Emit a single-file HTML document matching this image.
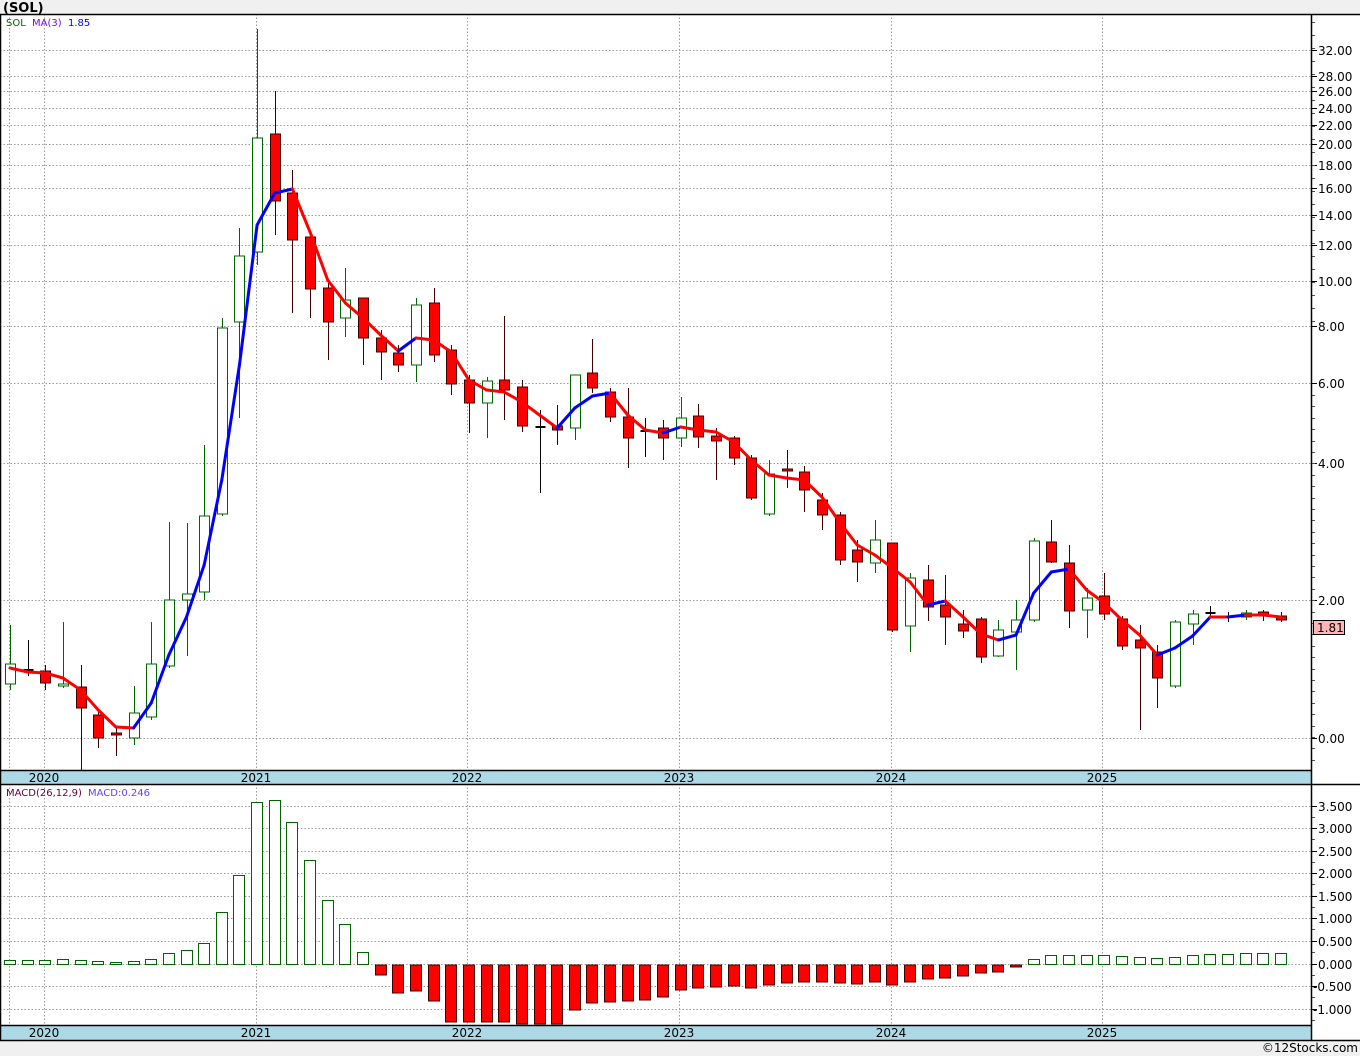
<!DOCTYPE html>
<html><head><meta charset="utf-8"><style>
body{margin:0;background:#f0f0f0;width:1360px;height:1056px;overflow:hidden;font-family:"DejaVu Sans","Liberation Sans",sans-serif}
svg{position:absolute;left:0;top:0}
</style></head><body>
<svg id="s" width="1360" height="1056" xmlns="http://www.w3.org/2000/svg" font-family="DejaVu Sans, Liberation Sans, sans-serif">
<rect x="0" y="14" width="1311" height="1026" fill="#fff"/>
<rect x="1311" y="14" width="49" height="1026" fill="#fff"/>
<text x="3" y="12" font-size="13" font-weight="bold">(SOL)</text>
<g id="g"></g>
<rect x="0" y="770" width="1311" height="14" fill="#add8e6"/>
<rect x="0" y="1025" width="1311" height="15" fill="#add8e6"/>
<g stroke="#000" stroke-width="1.5" fill="none">
<line x1="0" y1="14.5" x2="1360" y2="14.5"/>
<line x1="0" y1="770.5" x2="1311" y2="770.5"/>
<line x1="0" y1="784.5" x2="1360" y2="784.5"/>
<line x1="0" y1="1025.5" x2="1311" y2="1025.5"/>
<line x1="0" y1="1040.5" x2="1360" y2="1040.5"/>
<line x1="1311.5" y1="14" x2="1311.5" y2="1040"/>
<line x1="0.5" y1="14" x2="0.5" y2="1040"/>
</g>
<g font-size="12" fill="#000">
<text x="44" y="782" text-anchor="middle">2020</text><text x="256" y="782" text-anchor="middle">2021</text><text x="467" y="782" text-anchor="middle">2022</text><text x="679" y="782" text-anchor="middle">2023</text><text x="891" y="782" text-anchor="middle">2024</text><text x="1102" y="782" text-anchor="middle">2025</text>
<text x="44" y="1037" text-anchor="middle">2020</text><text x="256" y="1037" text-anchor="middle">2021</text><text x="467" y="1037" text-anchor="middle">2022</text><text x="679" y="1037" text-anchor="middle">2023</text><text x="891" y="1037" text-anchor="middle">2024</text><text x="1102" y="1037" text-anchor="middle">2025</text>
</g>
<g font-size="10">
<text x="6" y="26" fill="#006400">SOL</text><text x="32" y="26" fill="#8000ff">MA(3)</text><text x="68" y="26" fill="#0000ff">1.85</text>
<text x="6" y="796" fill="#600040">MACD(26,12,9)</text><text x="88" y="796" fill="#6a3cff">MACD:0.246</text>
</g>
<rect x="1313.5" y="620.5" width="31" height="14" fill="#ffb6b6" stroke="#000"/>
<text x="1317" y="632" font-size="12">1.81</text>
<text x="1358" y="1052" font-size="12" text-anchor="end">©12Stocks.com</text>
</svg>
<script>
var g=document.getElementById('g'),h='';
var pl=[[32,50],[28,76],[26,91],[24,108],[22,125],[20,144],[18,165],[16,188],[14,215],[12,245],[10,281],[8,326],[6,383],[4,463],[2,600],[0,738]];
var dash='stroke="#999" stroke-dasharray="1.5,2" stroke-width="1"';
pl.forEach(function(p){h+='<line x1="0" y1="'+p[1]+'.5" x2="1311" y2="'+p[1]+'.5" '+dash+'/>';h+='<line x1="1311" y1="'+p[1]+'.5" x2="1317" y2="'+p[1]+'.5" stroke="#000"/>';h+='<text x="1318" y="'+(p[1]+5)+'" font-size="12">'+p[0].toFixed(2)+'</text>';});
for(var y=395;y<760;y+=11.4){h+='<line x1="1311" y1="'+Math.round(y)+'.5" x2="1315" y2="'+Math.round(y)+'.5" stroke="#555"/>';}
for(var y=22;y<330;y+=13){h+='<line x1="1311" y1="'+Math.round(y)+'.5" x2="1315" y2="'+Math.round(y)+'.5" stroke="#555"/>';}
var ml=[[3.5,806],[3,828],[2.5,851],[2,873],[1.5,896],[1,918],[0.5,941],[0,964],[-0.5,986],[-1,1009]];
ml.forEach(function(p){h+='<line x1="0" y1="'+p[1]+'.5" x2="1311" y2="'+p[1]+'.5" '+dash+'/>';h+='<line x1="1311" y1="'+p[1]+'.5" x2="1317" y2="'+p[1]+'.5" stroke="#000"/>';h+='<line x1="1311" y1="'+(p[1]+11)+'.5" x2="1315" y2="'+(p[1]+11)+'.5" stroke="#555"/>';h+='<text x="'+(p[0]<0?1313:1318)+'" y="'+(p[1]+5)+'" font-size="12">'+p[0].toFixed(3)+'</text>';});
[9,44,256,467,679,891,1102].forEach(function(x){h+='<line x1="'+x+'.5" y1="14" x2="'+x+'.5" y2="1040" '+dash+'/>';});
var C=[[664,684,625,690,'h'],[670,672,640,676,'k'],[671,683,665,690,'r'],[684,686,622,688,'h'],[687,708,665,770,'r'],[715,738,710,748,'r'],[733,735,728,756,'r'],[713,738,686,745,'h'],[664,717,622,720,'h'],[600,666,522,668,'h'],[594,600,523,656,'h'],[516,592,445,600,'h'],[328,514,318,516,'h'],[256,322,228,418,'h'],[138,252,29,265,'h'],[134,201,91,235,'r'],[193,240,170,313,'r'],[237,289,237,318,'r'],[288,322,283,360,'r'],[300,318,268,337,'h'],[298,338,298,365,'r'],[338,352,330,380,'r'],[353,365,345,372,'r'],[305,365,298,382,'h'],[303,355,288,362,'r'],[350,384,345,395,'r'],[380,403,375,433,'r'],[381,403,377,438,'h'],[380,390,316,420,'r'],[387,426,380,432,'r'],[427,429,410,493,'k'],[426,430,405,445,'r'],[375,428,375,440,'h'],[373,388,339,393,'r'],[392,417,388,422,'r'],[417,438,388,468,'r'],[431,433,418,457,'k'],[428,438,420,460,'r'],[418,438,397,447,'h'],[416,437,404,448,'r'],[436,441,428,480,'r'],[438,458,436,465,'r'],[458,498,455,500,'r'],[474,514,460,516,'h'],[469,471,450,488,'r'],[472,490,466,512,'r'],[500,515,493,530,'r'],[515,560,512,565,'r'],[550,562,540,582,'r'],[540,563,520,573,'h'],[543,630,543,632,'r'],[578,626,573,652,'h'],[580,607,565,621,'r'],[605,617,575,645,'r'],[624,631,610,638,'r'],[619,657,617,663,'r'],[630,656,620,657,'h'],[620,632,600,670,'h'],[541,620,538,622,'h'],[542,562,520,563,'r'],[563,611,545,628,'r'],[598,610,588,638,'h'],[596,614,573,620,'r'],[619,646,616,650,'r'],[640,648,625,730,'r'],[652,678,645,708,'r'],[622,686,620,688,'h'],[614,624,610,645,'h'],[613,615,606,616,'k'],[617,619,612,622,'k'],[613,617,610,620,'h'],[612,616,610,621,'r'],[616,620,612,622,'r']];
var MA=[668,672,673,678,690,710,727,728,703,655,617,565,480,365,225,193,189,232,280,303,318,335,351,338,340,352,380,390,392,402,415,428,408,396,393,415,430,433,427,430,432,442,460,475,478,480,497,522,545,555,568,582,605,601,617,634,640,635,593,572,569,590,603,620,635,655,648,636,617,617,615,615,617];
var MD=[960,960,960,959,960,961,962,961,959,953,950,943,912,875,802,800,822,860,900,924,952,975,993,991,1001,1022,1022,1022,1022,1024,1024,1024,1010,1003,1002,1001,1000,997,990,988,987,986,988,985,983,982,982,983,984,982,985,982,979,978,976,973,972,967,959,955,955,955,955,956,957,958,957,955,954,954,953,953,953];
function X(i){return 10+17.65*i;}
C.forEach(function(c,i){var x=Math.round(X(i))+0.5;var col=c[4]=='h'?'#006400':(c[4]=='r'?'#400000':'#000');
h+='<line x1="'+x+'" y1="'+c[2]+'" x2="'+x+'" y2="'+c[3]+'" stroke="'+col+'"/>';
var t=c[0],b=Math.max(c[1],c[0]+1);
if(c[4]=='k'){h+='<line x1="'+(x-5)+'" y1="'+t+'" x2="'+(x+5)+'" y2="'+t+'" stroke="#000" stroke-width="2"/>';}
else h+='<rect x="'+(x-5)+'" y="'+t+'" width="10" height="'+(b-t)+'" fill="'+(c[4]=='r'?'#f00':'#fff')+'" stroke="'+col+'"/>';});
for(var i=0;i<MA.length-1;i++){var col=MA[i+1]<MA[i]?'#00f':'#f00';h+='<line x1="'+X(i)+'" y1="'+MA[i]+'" x2="'+X(i+1)+'" y2="'+MA[i+1]+'" stroke="'+col+'" stroke-width="3" stroke-linecap="round"/>';}
MD.forEach(function(v,i){var x=Math.round(X(i))-5.5;if(v<=964)h+='<rect x="'+x+'" y="'+(v+0.5)+'" width="11" height="'+Math.max(964-v,1)+'" fill="#fff" stroke="#006400"/>';else h+='<rect x="'+x+'" y="965" width="11" height="'+(v-965)+'" fill="#f00" stroke="#400000"/>';});
g.innerHTML=h;
</script>
</body></html>
